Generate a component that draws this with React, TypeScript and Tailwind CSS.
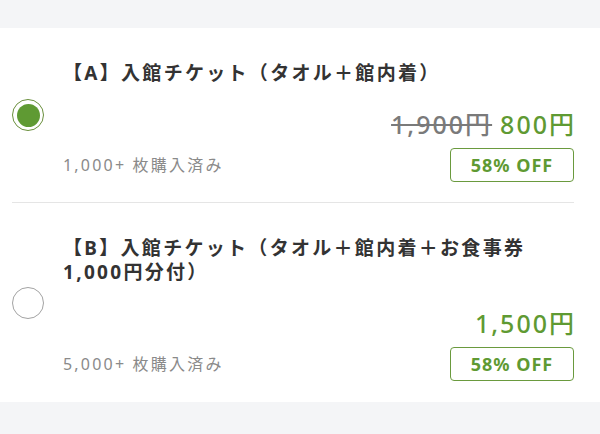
import React from "react";

const font = { fontFamily: '"Noto Sans", "Noto Sans CJK JP", sans-serif' };

function Radio({ checked }: { checked: boolean }) {
  return checked ? (
    <div className="w-[32px] h-[32px] rounded-full border-[1.5px] border-[#6a8f3c] flex items-center justify-center">
      <div className="w-[23px] h-[23px] rounded-full bg-[#5f9a33]" />
    </div>
  ) : (
    <div className="w-[32px] h-[32px] rounded-full border-[1.5px] border-[#a3a3a3]" />
  );
}

function Item({
  checked,
  title,
  oldPrice,
  price,
  sold,
  last,
}: {
  checked: boolean;
  title: React.ReactNode;
  oldPrice?: string;
  price: string;
  sold: string;
  last?: boolean;
}) {
  return (
    <div className={`flex items-center ${last ? "" : "border-b border-[#e5e5e5]"}`}>
      <div className="w-[51px] shrink-0 flex items-center">
        <Radio checked={checked} />
      </div>
      <div className={`flex-1 pt-[33px] ${last ? "pb-[21px]" : "pb-[20px]"}`}>
        <div className="text-[19px] leading-[24px] font-bold text-[#333333] tracking-[2.3px]">
          {title}
        </div>
        <div className="mt-[25px] flex justify-end items-center h-[28px] text-[25px] leading-[28px] font-medium tracking-[2px]">
          {oldPrice && (
            <span className="text-[#7a7a7a] line-through decoration-[1.5px] mr-[8px]">{oldPrice}</span>
          )}
          <span className="text-[#5f9a33] -mr-[2px]">{price}</span>
        </div>
        <div className="mt-[10px] flex justify-between items-center">
          <span className="text-[16px] text-[#8a8a8a] tracking-[2.2px]">{sold}</span>
          <div className="w-[124px] h-[34px] border-[1.5px] border-[#6a9a3e] rounded-[4px] flex items-center justify-center text-[18px] font-bold text-[#5f9a33] tracking-[1px]">
            58% OFF
          </div>
        </div>
      </div>
    </div>
  );
}

export default function App() {
  return (
    <div style={font} className="w-[600px] h-[434px] bg-[#f4f5f7] pt-[28px]">
      <div className="bg-white pl-[12px] pr-[26px]">
        <Item
          checked
          title="【A】入館チケット（タオル＋館内着）"
          oldPrice="1,900円"
          price="800円"
          sold="1,000+ 枚購入済み"
        />
        <Item
          checked={false}
          title={
            <>
              【B】入館チケット（タオル＋館内着＋お食事券
              <span className="whitespace-nowrap">1,000円分付）</span>
            </>
          }
          price="1,500円"
          sold="5,000+ 枚購入済み"
          last
        />
      </div>
    </div>
  );
}
